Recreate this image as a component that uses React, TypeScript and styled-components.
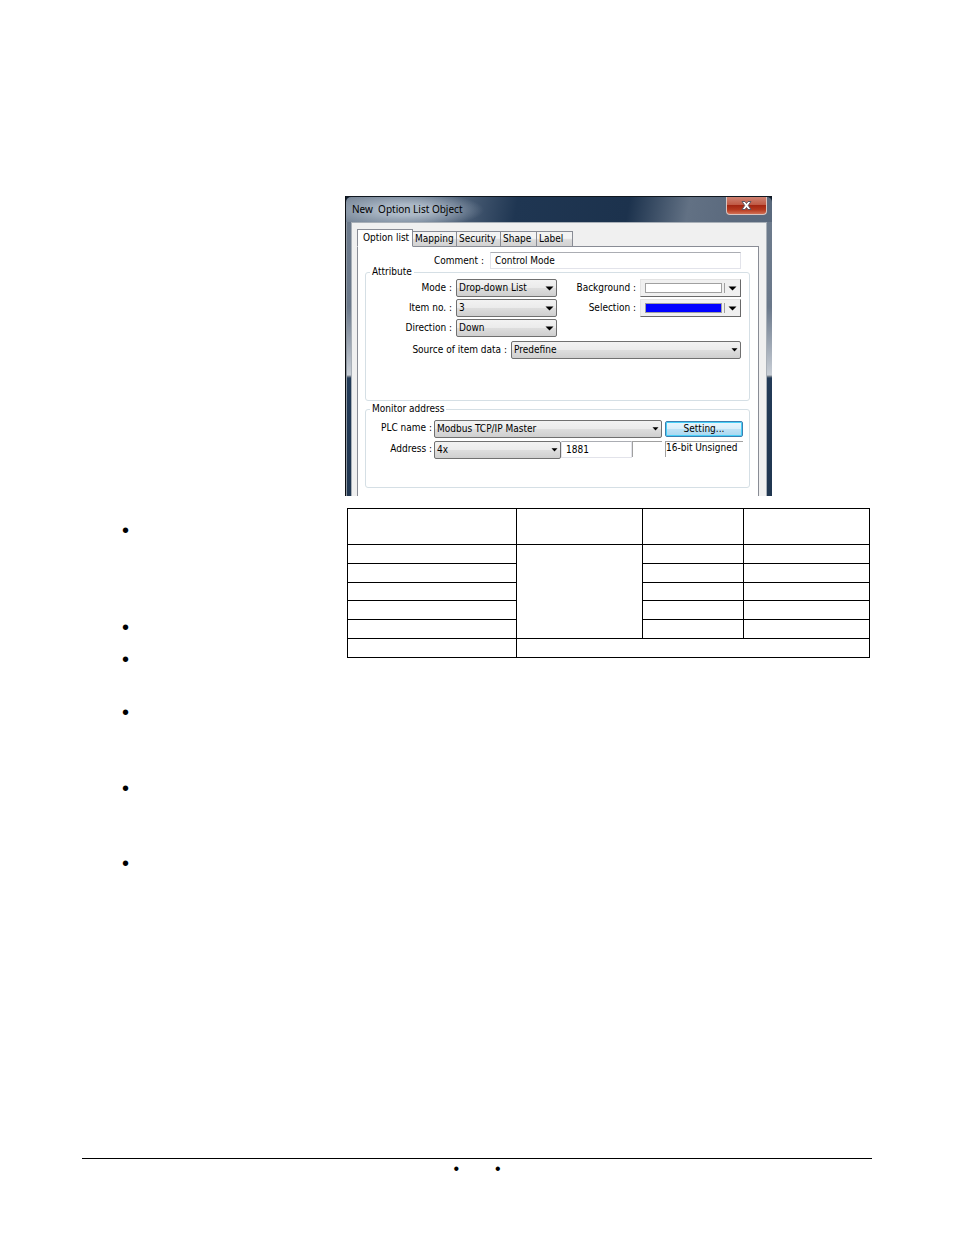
import React from "react";
import styled, { createGlobalStyle } from "styled-components";

const GlobalStyle = createGlobalStyle`
  * { box-sizing: border-box; }
  body { margin: 0; background: #fff; color: #000; }
`;

const titleFont = `"Noto Sans", "Open Sans", sans-serif`;
const uiFont = `"DejaVu Sans Condensed", "DejaVu Sans", sans-serif`;

const Sheet = styled.div`
  display: flex;
  flex-direction: column;
  min-height: 100vh;
  padding: 196px 82px 56px;
`;

const Dialog = styled.section`
  width: 427px;
  margin-left: 263px;
  padding: 0 5px;
  border-left: 1px solid #0b0e12;
  border-top: 1px solid #10171f;
  font: 10px/14px ${uiFont};
  background:
    linear-gradient(to bottom, #0f1c2b 8px, transparent 8px),
    linear-gradient(to right, #8d959e 1px, transparent 1px),
    linear-gradient(to bottom, #6d7b8c 0, #6a788a 110px, #c8ced6 178px, #8a929b 179px, #223a57 181px, #203650 100%);
`;

const TitleBar = styled.header`
  display: flex;
  justify-content: space-between;
  align-items: flex-start;
  height: 25px;
  margin: 0 -5px;
  padding-left: 6px;
  border-radius: 5px 5px 0 0;
  background:
    radial-gradient(ellipse 78px 18px at 60px 13px, rgba(184, 196, 209, 0.85) 30%, rgba(150, 165, 182, 0) 100%),
    linear-gradient(100deg, #7a8899 0%, #64758a 18%, #4a5d75 28%, #1f3652 40%, #1c324d 66%, #627184 80%, #5b6a7e 90%, #5a697d 100%);
`;

const Title = styled.h1`
  margin: 0;
  font: 10px/25px ${titleFont};
  white-space: pre;
`;

const CloseButton = styled.button`
  display: grid;
  place-items: center;
  width: 41px;
  height: 18px;
  margin-right: 5px;
  padding: 0;
  border: 1px solid #d9c4c0;
  border-top: 0;
  border-radius: 0 0 4px 4px;
  background: linear-gradient(#cf8272 0, #c05a45 45%, #a32612 50%, #b5391f 75%, #d27055 100%);
`;

const Client = styled.div`
  height: 274px;
  padding: 6px 7px 0 5px;
  border: 1px solid #a9b0b8;
  border-bottom: 0;
  background: #f0f0f0;
`;

const Tabs = styled.div`
  display: flex;
  align-items: flex-end;
  height: 18px;
  margin-bottom: -1px;
`;

const Tab = styled.button<{ $active?: boolean }>`
  width: ${(p) => (p.$active ? 56 : 44)}px;
  height: ${(p) => (p.$active ? 18 : 16)}px;
  padding: 0 ${(p) => (p.$active ? 5 : 2)}px;
  border: 1px solid #898c95;
  border-left-width: ${(p) => (p.$active ? 1 : 0)}px;
  border-bottom-color: ${(p) => (p.$active ? "#fff" : "#898c95")};
  background: ${(p) => (p.$active ? "#fff" : "linear-gradient(#f3f3f3 45%, #dcdcdc 55%, #d2d2d2)")};
  color: #000;
  font: inherit;
  line-height: 14px;
  text-align: left;
  white-space: nowrap;
`;

const SmallTab = styled(Tab)`
  width: 36px;
`;

const TabPage = styled.div`
  height: 250px;
  padding: 5px 8px 0 7px;
  border: 1px solid #898c95;
  border-bottom: 0;
  background: #fff;
`;

const CommentRow = styled.div`
  display: grid;
  grid-template-columns: 1fr 251px;
  column-gap: 6px;
  padding-right: 9px;
`;

const Label = styled.label`
  align-self: center;
  text-align: right;
  white-space: nowrap;
`;

const TextBox = styled.input`
  width: 100%;
  min-width: 0;
  height: 17px;
  padding: 0 4px;
  border: 1px solid #e2e3ea;
  border-top-color: #abadb3;
  background: #fff;
  color: #000;
  font: inherit;
`;

const Group = styled.fieldset`
  min-width: 0;
  margin: 0;
  padding: 4px 8px 0 0;
  border: 1px solid #d5dfe5;
  border-radius: 3px;
`;

const AttributeGroup = styled(Group)`
  height: 132px;
`;

const MonitorGroup = styled(Group)`
  height: 82px;
  margin-top: 5px;
  padding: 8px 6px 0 0;
`;

const Legend = styled.legend`
  margin-left: 4px;
  padding: 0 2px;
  line-height: 6px;
`;

const AttributeGrid = styled.div`
  display: grid;
  grid-template-columns: 86px 101px 1fr 101px;
  grid-auto-rows: 18px;
  gap: 2px 4px;
`;

const SourceRow = styled.div`
  display: grid;
  grid-template-columns: 141px 1fr;
  column-gap: 4px;
  margin-top: 4px;
`;

const MonitorRow = styled.div<{ $columns: string }>`
  display: grid;
  grid-template-columns: ${(p) => p.$columns};
  margin-bottom: 3px;
  align-items: start;
`;

const MonitorLabel = styled(Label)`
  padding: 1px 2px 0 0;
  align-self: start;
`;

const SelectFrame = styled.span`
  display: grid;
  align-items: center;
  > * { grid-area: 1 / 1; }
  > svg { justify-self: end; margin-right: 3px; pointer-events: none; }
`;

const SelectBox = styled.select`
  appearance: none;
  width: 100%;
  height: 18px;
  padding: 0 12px 0 2px;
  border: 1px solid #707070;
  border-radius: 2px;
  background: linear-gradient(#f2f2f2, #ebebeb 48%, #dddddd 52%, #cfcfcf);
  color: #000;
  font: inherit;
`;

const ColorButton = styled.button`
  display: flex;
  align-items: center;
  gap: 2px;
  height: 18px;
  padding: 0 3px 0 4px;
  border: 1px solid #696969;
  border-top-color: #e3e3e3;
  border-left-color: #e3e3e3;
  background: #f0f0f0;
`;

const Swatch = styled.span<{ $color: string }>`
  flex: 1;
  height: 10px;
  border: 1px solid #a0a0a0;
  background: ${(p) => p.$color};
`;

const Divider = styled.span`
  width: 1px;
  height: 10px;
  margin-right: 1px;
  background: #a0a0a0;
`;

const SettingButton = styled.button`
  height: 16px;
  margin: 1px 0 0 3px;
  padding: 0;
  border: 1px solid #3c7fb1;
  border-radius: 2px;
  box-shadow: inset 0 0 0 1px #48d0f8;
  background: linear-gradient(#eaf6fd, #d9effb 48%, #bee2f5 52%, #a9d7f0);
  color: #000;
  font: inherit;
  line-height: 12px;
`;

const Readout = styled.output`
  height: 16px;
  margin-left: 3px;
  border-top: 1px solid #a0a0a0;
  border-left: 1px solid #a0a0a0;
  line-height: 12px;
  white-space: nowrap;
`;

const BlankReadout = styled(Readout)`
  margin-left: 0;
`;

const Body = styled.main`
  display: grid;
  grid-template-columns: 265px minmax(0, 1fr);
  align-items: start;
  padding: 12px 2px 0 0;
`;

const Bullets = styled.ul`
  margin: 0;
  padding: 12px 0 0 40px;
  list-style: none;
`;

const Bullet = styled.li<{ $space: number }>`
  height: ${(p) => p.$space}px;
  font: 20px/20px "Liberation Sans", sans-serif;
`;

const DataTable = styled.table`
  width: 100%;
  height: 150px;
  border-collapse: collapse;
  table-layout: fixed;
  td, th { padding: 0; border: 1px solid #000; }
  thead tr { height: 36px; }
`;

const Column = styled.col<{ $width?: number }>`
  width: ${(p) => (p.$width ? `${p.$width}px` : "auto")};
`;

const Footer = styled.footer`
  display: flex;
  justify-content: center;
  gap: 36px;
  margin-top: auto;
  border-top: 1px solid #000;
  font: 16px/20px "Liberation Sans", sans-serif;
`;

function Arrow({ small }: { small?: boolean }) {
  return small ? (
    <svg width="7" height="4" viewBox="0 0 7 4" aria-hidden="true">
      <path d="M0.5 0.3H6.5L3.5 3.6Z" fill="#000" />
    </svg>
  ) : (
    <svg width="9" height="5" viewBox="0 0 9 5" aria-hidden="true">
      <path d="M0.5 0.5H8.5L4.5 4.5Z" fill="#000" />
    </svg>
  );
}

function Select({ id, value, small }: { id: string; value: string; small?: boolean }) {
  return (
    <SelectFrame>
      <SelectBox id={id} defaultValue={value}>
        <option>{value}</option>
      </SelectBox>
      <Arrow small={small} />
    </SelectFrame>
  );
}

function ColorPicker({ id, color }: { id: string; color: string }) {
  return (
    <ColorButton id={id} type="button">
      <Swatch $color={color} />
      <Divider />
      <Arrow />
    </ColorButton>
  );
}

function OptionListDialog() {
  return (
    <Dialog>
      <TitleBar>
        <Title>{"New  Option List Object"}</Title>
        <CloseButton type="button" aria-label="Close">
          <svg width="11" height="9" viewBox="0 0 11 9" aria-hidden="true">
            <path d="M1 0.5H4L5.5 2.5L7 0.5H10L7.3 4.5L10 8.5H7L5.5 6.5L4 8.5H1L3.7 4.5Z" fill="#fff" stroke="#5d5561" strokeWidth="1" />
          </svg>
        </CloseButton>
      </TitleBar>
      <Client>
        <Tabs role="tablist">
          <Tab $active type="button" role="tab" aria-selected="true">Option list</Tab>
          <Tab type="button" role="tab">Mapping</Tab>
          <Tab type="button" role="tab">Security</Tab>
          <SmallTab type="button" role="tab">Shape</SmallTab>
          <SmallTab type="button" role="tab">Label</SmallTab>
        </Tabs>
        <TabPage role="tabpanel">
          <CommentRow>
            <Label htmlFor="comment">Comment :</Label>
            <TextBox id="comment" defaultValue="Control Mode" />
          </CommentRow>
          <AttributeGroup>
            <Legend>Attribute</Legend>
            <AttributeGrid>
              <Label htmlFor="mode">Mode :</Label>
              <Select id="mode" value="Drop-down List" />
              <Label htmlFor="background">Background :</Label>
              <ColorPicker id="background" color="#fff" />
              <Label htmlFor="items">Item no. :</Label>
              <Select id="items" value="3" />
              <Label htmlFor="selection">Selection :</Label>
              <ColorPicker id="selection" color="#00f" />
              <Label htmlFor="direction">Direction :</Label>
              <Select id="direction" value="Down" />
            </AttributeGrid>
            <SourceRow>
              <Label htmlFor="source">Source of item data :</Label>
              <Select id="source" value="Predefine" small />
            </SourceRow>
          </AttributeGroup>
          <MonitorGroup>
            <Legend>Monitor address</Legend>
            <MonitorRow $columns="68px 1fr 81px">
              <MonitorLabel htmlFor="plc">PLC name :</MonitorLabel>
              <Select id="plc" value="Modbus TCP/IP Master" small />
              <SettingButton type="button">Setting...</SettingButton>
            </MonitorRow>
            <MonitorRow $columns="68px 127px 71px 1fr 81px">
              <MonitorLabel htmlFor="address">Address :</MonitorLabel>
              <Select id="address" value="4x" small />
              <TextBox aria-label="Address value" defaultValue="1881" />
              <BlankReadout />
              <Readout>16-bit Unsigned</Readout>
            </MonitorRow>
          </MonitorGroup>
        </TabPage>
      </Client>
    </Dialog>
  );
}

const bulletSpaces = [97, 32, 53, 76, 75, 20];
const dataRows = [0, 1, 2, 3, 4];

export default function App() {
  return (
    <Sheet>
      <GlobalStyle />
      <OptionListDialog />
      <Body>
        <Bullets>
          {bulletSpaces.map((space, i) => (
            <Bullet key={i} $space={space}>•</Bullet>
          ))}
        </Bullets>
        <DataTable>
          <colgroup>
            <Column $width={169} />
            <Column $width={126} />
            <Column $width={101} />
            <Column />
          </colgroup>
          <thead>
            <tr><th /><th /><th /><th /></tr>
          </thead>
          <tbody>
            {dataRows.map((row) => (
              <tr key={row}>
                <td />
                {row === 0 && <td rowSpan={dataRows.length} />}
                <td />
                <td />
              </tr>
            ))}
            <tr><td /><td colSpan={3} /></tr>
          </tbody>
        </DataTable>
      </Body>
      <Footer>
        <span>•</span>
        <span>•</span>
      </Footer>
    </Sheet>
  );
}
